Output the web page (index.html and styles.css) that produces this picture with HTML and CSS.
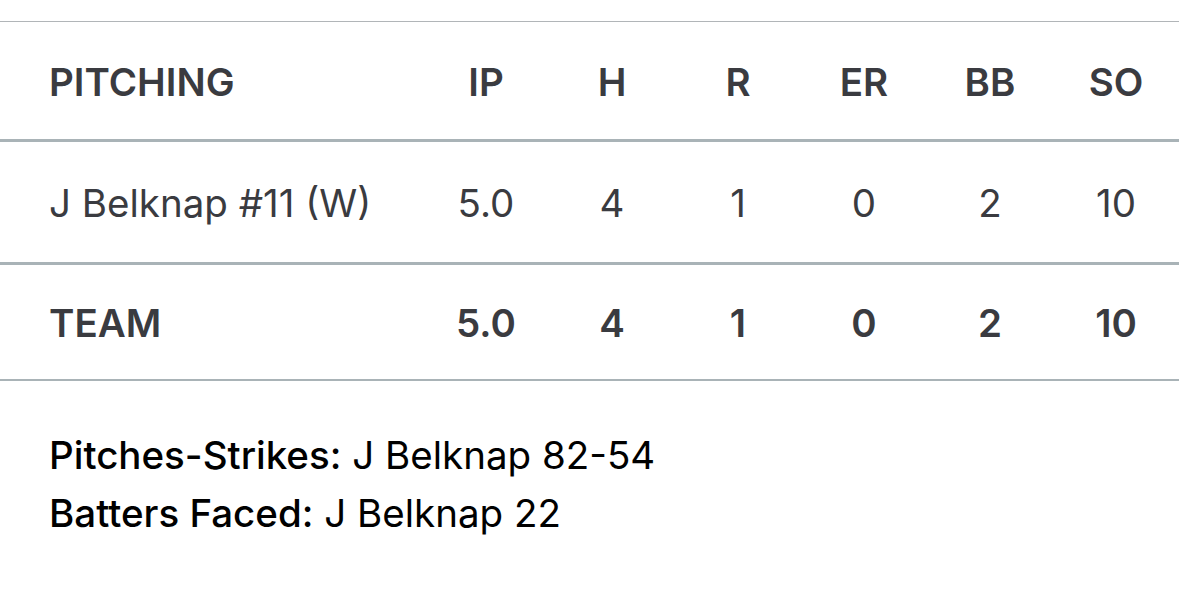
FILE: index.html
```html
<!DOCTYPE html>
<html>
<head>
<meta charset="utf-8">
<link rel="stylesheet" href="styles.css">
</head>
<body>
<div class="page">
  <table class="box">
    <thead>
      <tr class="head">
        <th class="name">PITCHING</th>
        <th>IP</th><th>H</th><th>R</th><th>ER</th><th>BB</th><th>SO</th>
      </tr>
    </thead>
    <tbody>
      <tr class="player">
        <td class="name">J Belknap #11 (W)</td>
        <td>5.0</td><td>4</td><td>1</td><td>0</td><td>2</td><td>10</td>
      </tr>
      <tr class="team">
        <td class="name">TEAM</td>
        <td>5.0</td><td>4</td><td>1</td><td>0</td><td>2</td><td>10</td>
      </tr>
    </tbody>
  </table>
  <div class="notes">
    <p class="note"><span class="label">Pitches-Strikes:</span> J Belknap 82-54</p>
    <p class="note"><span class="label">Batters Faced:</span> J Belknap 22</p>
  </div>
</div>
</body>
</html>
```

FILE: styles.css
```css
html, body {
  margin: 0;
  padding: 0;
  background: #ffffff;
}
.page {
  padding-top: 21px;
  font-family: Inter, "Liberation Sans", Arial, sans-serif;
}
.box {
  width: 100%;
  border-collapse: collapse;
  border-top: 1px solid #b1b5b8;
  table-layout: fixed;
}
.box th, .box td {
  width: 126px;
  text-align: center;
  font-size: 38.5px;
  line-height: 46px;
  color: #3a3b40;
  padding: 0;
}
.box .name {
  width: auto;
  text-align: left;
  padding-left: 49px;
}
.head th {
  height: 114px;
  padding-top: 3px;
  font-weight: 600;
  border-bottom: 3px solid #a9b3b7;
}
.player td {
  height: 118px;
  padding-top: 2px;
  font-weight: 400;
  border-bottom: 3px solid #a9b3b7;
}
.team td {
  height: 113px;
  padding-top: 1px;
  font-weight: 600;
  border-bottom: 2px solid #a9b3b7;
}
.notes {
  padding: 45px 0 0 49px;
}
.note {
  margin: 0;
  font-size: 38.5px;
  line-height: 58px;
  color: #000000;
}
.label {
  font-weight: 500;
}
```
